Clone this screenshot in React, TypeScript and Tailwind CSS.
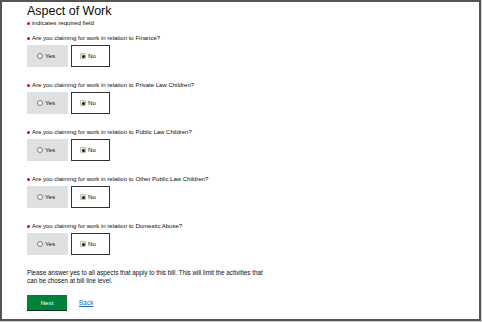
import { useState } from 'react'

type Question = {
  id: string
  label: string
}

const questions: Question[] = [
  { id: 'finance', label: 'Are you claiming for work in relation to Finance?' },
  { id: 'private', label: 'Are you claiming for work in relation to Private Law Children?' },
  { id: 'public', label: 'Are you claiming for work in relation to Public Law Children?' },
  { id: 'otherPublic', label: 'Are you claiming for work in relation to Other Public Law Children?' },
  { id: 'domestic', label: 'Are you claiming for work in relation to Domestic Abuse?' },
]

const RequiredDot = () => (
  <span className="mr-[2px] inline-block h-[3px] w-[3px] shrink-0 rounded-full bg-[#e4002b]" />
)

const Radio = ({ checked }: { checked: boolean }) =>
  checked ? (
    <span className="flex h-[6px] w-[6px] items-center justify-center rounded-[1px] border border-[#bbb] bg-[#e8e8e8]">
      <span className="h-[3px] w-[3px] rounded-full bg-[#111]" />
    </span>
  ) : (
    <span className="h-[6px] w-[6px] rounded-full border border-[#777] bg-white" />
  )

const App = () => {
  const [answers, setAnswers] = useState<Record<string, 'yes' | 'no'>>(
    Object.fromEntries(questions.map((q) => [q.id, 'no']))
  )

  return (
    <div className="h-[322px] w-[482px] bg-[#d4d4d4] font-['Liberation_Sans',Arial,sans-serif] text-[#0b0c0c]">
      <div className="h-[321px] w-[481px] border-2 border-[#555] bg-white pl-[25px] pt-[3px]">
        <h1 className="text-[12.5px] leading-[12px]">Aspect of Work</h1>
        <p className="mt-[2px] flex items-center text-[6.2px] leading-[8px]">
          <RequiredDot />
          indicates required field
        </p>

        <div className="mt-[7px]">
          {questions.map((q) => {
            const value = answers[q.id]
            return (
              <div key={q.id} className="mb-[14px]">
                <p className="flex items-center text-[6px] leading-[8px]">
                  <RequiredDot />
                  {q.label}
                </p>
                <div className="mt-[3px] flex gap-[3px]">
                  <button
                    onClick={() => setAnswers({ ...answers, [q.id]: 'yes' })}
                    className={`flex h-[22px] w-[41px] items-center gap-[2px] pl-[10px] text-[6.2px] ${
                      value === 'yes' ? 'border border-[#333] bg-white' : 'bg-[#dee0e2]'
                    }`}
                  >
                    <Radio checked={value === 'yes'} />
                    Yes
                  </button>
                  <button
                    onClick={() => setAnswers({ ...answers, [q.id]: 'no' })}
                    className={`flex h-[22px] w-[39px] items-center gap-[2px] pl-[8px] text-[6.2px] ${
                      value === 'no' ? 'border border-[#333] bg-white' : 'bg-[#dee0e2]'
                    }`}
                  >
                    <Radio checked={value === 'no'} />
                    No
                  </button>
                </div>
              </div>
            )
          })}
        </div>

        <p className="mt-[4px] w-[238px] text-[6.3px] leading-[8px]">
          Please answer yes to all aspects that apply to this bill. This will limit the activities that
          can be chosen at bill line level.
        </p>

        <div className="mt-[10px] flex items-center gap-[12px]">
          <button className="h-[15px] w-[40px] bg-[#00823b] text-[6.2px] text-white shadow-[0_1px_0_#003418]">
            Next
          </button>
          <a href="#" className="text-[6.5px] text-[#1d70b8] underline">
            Back
          </a>
        </div>
      </div>
    </div>
  )
}

export default App
